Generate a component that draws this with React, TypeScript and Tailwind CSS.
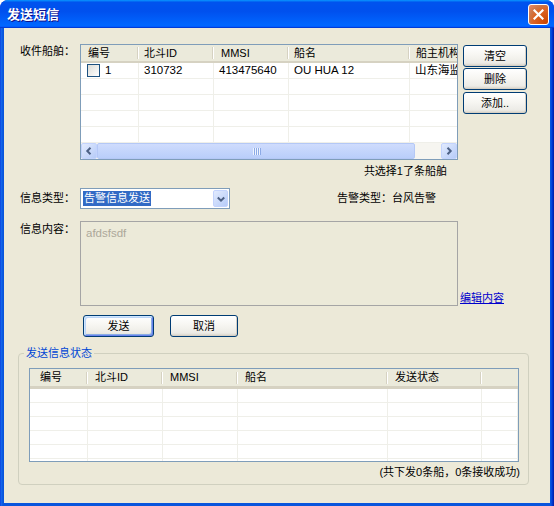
import React from "react";

const F = "font-['Liberation_Sans','Noto_Sans_CJK_SC',sans-serif]";

function Btn({ children, cls, def }: { children: React.ReactNode; cls: string; def?: boolean }) {
  return (
    <div
      className={`${cls} flex items-center justify-center rounded-[3px] border border-[#003C74] bg-[linear-gradient(180deg,#ffffff_0%,#f7f6f2_45%,#ecebe6_85%,#d6d0c5_100%)] text-[11px] text-black ${
        def
          ? "shadow-[inset_1px_1px_#cee7ff,inset_-1px_-1px_#6982ee,inset_2px_2px_#bcd4f6,inset_-2px_-2px_#89ade4]"
          : "shadow-[inset_-1px_-1px_#d6d0c5]"
      }`}
    >
      {children}
    </div>
  );
}

function ScrollBtn({ dir }: { dir: "l" | "r" }) {
  return (
    <div className="flex h-[16px] w-[16px] shrink-0 items-center justify-center rounded-[2px] border border-[#c3d3fd] bg-[linear-gradient(135deg,#e2ebfe,#b6cbf8)]">
      <svg width="8" height="8" viewBox="0 0 8 8">
        <path
          d={dir === "l" ? "M5.5 0.8 L2.3 4 L5.5 7.2" : "M2.5 0.8 L5.7 4 L2.5 7.2"}
          stroke="#4d6185"
          strokeWidth="2"
          fill="none"
        />
      </svg>
    </div>
  );
}

function HeadCell({ w, pl, children, last }: { w: string; pl: string; children?: React.ReactNode; last?: boolean }) {
  return (
    <div className={`${w} flex h-full shrink-0 items-center justify-between`}>
      <span className={`${pl} whitespace-nowrap`}>{children}</span>
      {!last && <div className="h-[12px] w-[2px] shrink-0 border-l border-r border-l-[#d6d2c2] border-r-white" />}
    </div>
  );
}

function Checkbox() {
  return (
    <div className="h-[13px] w-[13px] shrink-0 border border-[#1c5180] bg-[linear-gradient(135deg,#dcdcd7,#ffffff)]" />
  );
}

export default function App() {
  const upperCols = ["w-[58px]", "w-[75px]", "w-[75px]", "w-[121px]", "w-[60px]"];
  const lowerCols = ["w-[58px]", "w-[75px]", "w-[75px]", "w-[150px]", "w-[94px]", "w-[36px]"];

  return (
    <div className={`${F} flex h-[506px] w-[554px] flex-col overflow-hidden rounded-t-[8px] bg-[#0831d9]`}>
      {/* Title bar */}
      <div className="flex h-[28px] shrink-0 items-center justify-between bg-[linear-gradient(180deg,#0997ff,#0053ee_8%,#0050ee_40%,#0066ff_88%,#0066ff_93%,#005bff_95%,#003dd7_96%,#003dd7)] pl-[7px] pr-[5px]">
        <span className="text-[13px] font-bold leading-none text-white [text-shadow:1px_1px_#0f1089]">发送短信</span>
        <div className="flex h-[21px] w-[21px] items-center justify-center rounded-[3px] border border-white bg-[radial-gradient(circle_at_90%_90%,#cc4600_0%,#dc6527_55%,#cd7546_70%,#e88a6a_100%)]">
          <svg width="11" height="11" viewBox="0 0 11 11">
            <path d="M1.5 1.5 L9.5 9.5 M9.5 1.5 L1.5 9.5" stroke="white" strokeWidth="2.2" strokeLinecap="square" />
          </svg>
        </div>
      </div>

      {/* Frame + client */}
      <div className="flex flex-1 bg-[linear-gradient(90deg,#0831d9_0px,#166aee_1px,#0855dd_3px,#0855dd_calc(100%-3px),#003bda_calc(100%-2px),#001ea0_100%)] px-[4px] pb-[3px]">
        <div className="flex flex-1 flex-col bg-[#ece9d8] text-[11px] text-black">
          {/* Section 1 */}
          <div className="mt-[16px] flex">
            <div className="ml-[16px] w-[60px] pt-[1px] leading-[13px]">收件船舶：</div>
            <div className="flex h-[116px] w-[378px] flex-col overflow-hidden border border-[#7f9db9] bg-white">
              <div className="flex h-[18px] shrink-0 border-b-2 border-[#d6d2c2] bg-[#ebeadb]">
                <HeadCell w={upperCols[0]} pl="pl-[7px]">编号</HeadCell>
                <HeadCell w={upperCols[1]} pl="pl-[5px]">北斗ID</HeadCell>
                <HeadCell w={upperCols[2]} pl="pl-[7px]">MMSI</HeadCell>
                <HeadCell w={upperCols[3]} pl="pl-[5px]">船名</HeadCell>
                <HeadCell w={upperCols[4]} pl="pl-[6px]" last>船主机构</HeadCell>
              </div>
              <div className="flex flex-1 flex-col text-[11.5px]">
                {[0, 1, 2, 3, 4].map((r) => (
                  <div key={r} className="flex h-[16px] shrink-0 border-b border-[#efefe9]">
                    {upperCols.map((c, i) => (
                      <div key={i} className={`${c} flex shrink-0 items-center overflow-hidden whitespace-nowrap border-r border-[#efefe9] pl-[5px]`}>
                        {r === 0 && i === 0 && (
                          <div className="flex items-center gap-[5px] pl-[1px]">
                            <Checkbox />
                            <span>1</span>
                          </div>
                        )}
                        {r === 0 && i === 1 && "310732"}
                        {r === 0 && i === 2 && "413475640"}
                        {r === 0 && i === 3 && "OU HUA 12"}
                        {r === 0 && i === 4 && "山东海监"}
                      </div>
                    ))}
                  </div>
                ))}
              </div>
              <div className="flex h-[16px] shrink-0 bg-[#f6f5f0]">
                <ScrollBtn dir="l" />
                <div className="flex h-[16px] w-[318px] items-center justify-center rounded-[2px] border border-[#b4c8f6] bg-[linear-gradient(180deg,#cfdcfd,#b9cefa)]">
                  <div className="flex gap-[1px]">
                    {[0, 1, 2, 3].map((k) => (
                      <div key={k} className="h-[7px] w-[1px] bg-[#eef4fe] shadow-[1px_0_#8caae6]" />
                    ))}
                  </div>
                </div>
                <div className="flex-1" />
                <ScrollBtn dir="r" />
              </div>
            </div>
            <div className="ml-[5px] mt-[1px] flex flex-col">
              <Btn cls="h-[22px] w-[64px]">清空</Btn>
              <Btn cls="mt-[1px] h-[22px] w-[64px]">删除</Btn>
              <Btn cls="mt-[2px] h-[22px] w-[64px]">添加..</Btn>
            </div>
          </div>

          <div className="ml-[76px] mt-[4px] w-[367px] text-right leading-[14px]">共选择1了条船舶</div>

          {/* Select row */}
          <div className="mt-[10px] flex items-center">
            <div className="ml-[16px] w-[60px]">信息类型：</div>
            <div className="flex h-[21px] w-[150px] items-center border border-[#7f9db9] bg-white">
              <span className="ml-[2px] bg-[#316ac5] px-[1px] leading-[15px] text-white">告警信息发送</span>
              <div className="flex-1" />
              <div className="mr-[1px] flex h-[17px] w-[15px] items-center justify-center rounded-[2px] border border-[#c3d3fd] bg-[linear-gradient(135deg,#e2ebfe,#b6cbf8)]">
                <svg width="8" height="8" viewBox="0 0 8 8">
                  <path d="M0.8 2.5 L4 5.7 L7.2 2.5" stroke="#4d6185" strokeWidth="2" fill="none" />
                </svg>
              </div>
            </div>
            <div className="ml-[107px]">告警类型：台风告警</div>
          </div>

          {/* Content row */}
          <div className="mt-[12px] flex">
            <div className="ml-[16px] w-[60px] pt-[2px] leading-[13px]">信息内容：</div>
            <div className="h-[85px] w-[378px] border border-[#a5a5a5] bg-[#ecead9] px-[5px] pt-[4px] text-[11.5px] leading-[14px] text-[#aca899]">
              afdsfsdf
            </div>
            <a className="mb-[1px] ml-[2px] self-end text-[11px] leading-[13px] text-[#0000cc] underline">编辑内容</a>
          </div>

          {/* Buttons row */}
          <div className="mt-[9px] flex">
            <Btn cls="ml-[79px] h-[22px] w-[71px]" def>
              发送
            </Btn>
            <Btn cls="ml-[16px] h-[22px] w-[68px]">取消</Btn>
          </div>

          {/* Group */}
          <fieldset className="ml-[14px] mt-[9px] w-[511px] rounded-[4px] border border-[#d0d0bf] pb-[5px] pr-[8px]">
            <legend className="ml-[5px] px-[2px] text-[11px] leading-[14px] text-[#0046d5]">发送信息状态</legend>
            <div className="ml-[10px] mt-[8px] flex h-[94px] w-[490px] flex-col overflow-hidden border border-[#7f9db9] bg-white">
              <div className="flex h-[20px] shrink-0 border-b-[3px] border-[#d6d2c2] bg-[#ebeadb]">
                <HeadCell w={lowerCols[0]} pl="pl-[10px]">编号</HeadCell>
                <HeadCell w={lowerCols[1]} pl="pl-[7px]">北斗ID</HeadCell>
                <HeadCell w={lowerCols[2]} pl="pl-[7px]">MMSI</HeadCell>
                <HeadCell w={lowerCols[3]} pl="pl-[7px]">船名</HeadCell>
                <HeadCell w={lowerCols[4]} pl="pl-[7px]">发送状态</HeadCell>
                <HeadCell w={lowerCols[5]} pl="pl-[7px]" last />
              </div>
              {[0, 1, 2, 3, 4, 5].map((r) => (
                <div key={r} className="flex h-[14px] shrink-0 border-b border-[#efefe9]">
                  {lowerCols.map((c, i) => (
                    <div key={i} className={`${c} shrink-0 border-r border-[#efefe9]`} />
                  ))}
                </div>
              ))}
            </div>
            <div className="mt-[3px] text-right leading-[14px]">(共下发0条船，0条接收成功)</div>
          </fieldset>
        </div>
      </div>
    </div>
  );
}
